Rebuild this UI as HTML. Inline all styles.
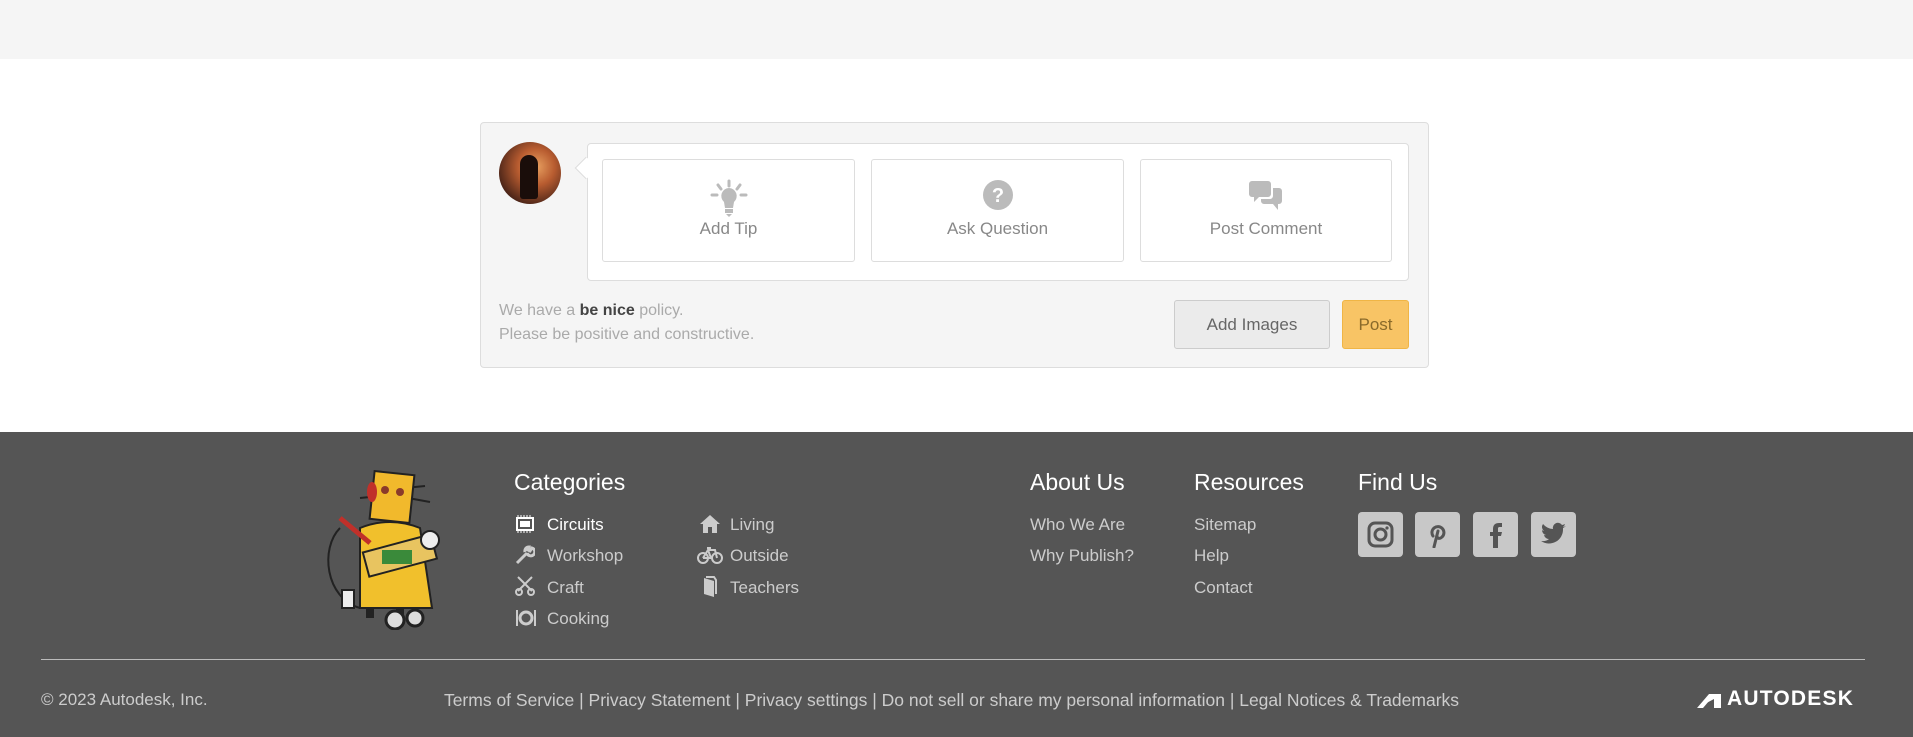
<!DOCTYPE html>
<html><head><meta charset="utf-8"><style>
*{box-sizing:border-box;margin:0;padding:0}
body{width:1913px;height:737px;overflow:hidden;background:#fff;font-family:"Liberation Sans",sans-serif;position:relative}
.abs{position:absolute}
.top{left:0;top:0;width:1913px;height:59px;background:#f5f5f5}
.box{left:480px;top:122px;width:949px;height:246px;background:#f5f5f5;border:1px solid #ddd;border-radius:4px}
.av{left:499px;top:142px;width:62px;height:62px;border-radius:50%;background:radial-gradient(circle at 60% 40%,#e8a060 0,#b85c30 35%,#4a2418 75%,#1c0f0c 100%)}
.inner{left:587px;top:143px;width:822px;height:138px;background:#fff;border:1px solid #ddd;border-radius:4px}
.tri{left:578px;top:160px;width:16px;height:16px;background:#fff;border-left:1px solid #ddd;border-bottom:1px solid #ddd;transform:rotate(45deg)}
.btn{top:159px;height:103px;background:#fff;border:1px solid #ddd;border-radius:3px;text-align:center;color:#888;font-size:17px}
.btn svg{position:absolute;left:50%;top:19px;transform:translateX(-50%)}
.btn span{position:absolute;left:0;right:0;top:59px}
.pol{left:499px;color:#aaa;font-size:16px}
.pol b{color:#444}
.ai{left:1174px;top:300px;width:156px;height:49px;background:#ebebeb;border:1px solid #ccc;border-radius:3px;color:#666;font-size:17px;text-align:center;line-height:47px}
.post{left:1342px;top:300px;width:67px;height:49px;background:#f8c465;border:1px solid #f0b545;border-radius:3px;color:#8a6a2a;font-size:17px;text-align:center;line-height:47px}
.foot{left:0;top:432px;width:1913px;height:305px;background:#555}
.h{color:#fff;font-size:23px;top:469px}
.it{color:#ccc;font-size:17px}
.it.w{color:#fff}
.soc{top:512px;width:45px;height:45px;background:#c8c8c8;border-radius:4px}
.soc svg{position:absolute;left:9px;top:9px}
.hr{left:41px;top:659px;width:1824px;height:1px;background:#bbb}
.bot{top:690px;color:#ccc;font-size:17px}
</style></head><body>
<div class="abs top"></div>
<div class="abs box"></div>
<div class="abs av"></div>
<div class="abs" style="left:520px;top:155px;width:18px;height:44px;background:#1a0d0a;border-radius:9px 9px 3px 3px"></div>
<div class="abs inner"></div>
<div class="abs tri"></div>
<div class="abs btn" style="left:602px;width:253px"><svg width="40" height="38" viewBox="0 0 40 38"><g stroke="#bbb" stroke-width="3" stroke-linecap="round"><line x1="20" y1="2" x2="20" y2="7"/><line x1="9" y1="6" x2="12" y2="10"/><line x1="31" y1="6" x2="28" y2="10"/><line x1="3" y1="16" x2="8" y2="16"/><line x1="32" y1="16" x2="37" y2="16"/></g><path d="M20 9a8 8 0 0 0-5 14l1 6h8l1-6a8 8 0 0 0-5-14z" fill="#bbb"/><rect x="16" y="30" width="8" height="4" fill="#bbb"/><path d="M17 35h6l-3 3z" fill="#bbb"/></svg><span>Add Tip</span></div>
<div class="abs btn" style="left:871px;width:253px"><svg width="32" height="32" viewBox="0 0 32 32"><circle cx="16" cy="16" r="15" fill="#bbb"/><text x="16" y="23" text-anchor="middle" font-family="Liberation Sans" font-weight="bold" font-size="20" fill="#fff">?</text></svg><span>Ask Question</span></div>
<div class="abs btn" style="left:1140px;width:252px"><svg width="36" height="32" viewBox="0 0 36 32"><path d="M4 2h16a3 3 0 0 1 3 3v10a3 3 0 0 1-3 3H11l-5 5v-5H4a3 3 0 0 1-3-3V5a3 3 0 0 1 3-3z" fill="#bbb"/><path d="M25 9h6a3 3 0 0 1 3 3v10a3 3 0 0 1-3 3h-1v6l-5-6h-9a3 3 0 0 1-3-3v-2h9a3 3 0 0 0 3-3z" fill="#bbb"/></svg><span>Post Comment</span></div>
<div class="abs pol" style="top:302px">We have a <b>be nice</b> policy.</div>
<div class="abs pol" style="top:326px">Please be positive and constructive.</div>
<div class="abs ai">Add Images</div>
<div class="abs post">Post</div>

<div class="abs foot"></div>
<svg class="abs" style="left:320px;top:468px" width="150" height="162" viewBox="0 0 150 162">
<path d="M20 60c-20 20-15 70 20 80" stroke="#222" stroke-width="2" fill="none"/>
<path d="M60 28L40 30M85 20l20-2M88 30l22 4" stroke="#222" stroke-width="2"/>
<rect x="52" y="5" width="40" height="48" fill="#f1b92c" stroke="#222" stroke-width="2" transform="rotate(6 72 29)"/>
<circle cx="65" cy="22" r="4" fill="#8a3a2a"/><circle cx="80" cy="24" r="4" fill="#8a3a2a"/>
<ellipse cx="52" cy="24" rx="5" ry="10" fill="#c0302a"/>
<path d="M40 60q30-12 60 0l12 80h-72z" fill="#f1c02c" stroke="#222" stroke-width="2"/>
<path d="M20 50l30 25" stroke="#c0302a" stroke-width="5"/>
<rect x="45" y="75" width="70" height="25" fill="#e8c460" stroke="#222" stroke-width="2" transform="rotate(-15 80 88)"/>
<circle cx="110" cy="72" r="9" fill="#eee" stroke="#222" stroke-width="2"/>
<rect x="62" y="82" width="30" height="14" fill="#3a8a3a"/>
<path d="M50 140v10M80 140v10" stroke="#222" stroke-width="8"/>
<circle cx="75" cy="152" r="9" fill="#ddd" stroke="#222" stroke-width="3"/><circle cx="95" cy="150" r="8" fill="#ddd" stroke="#222" stroke-width="3"/>
<rect x="22" y="122" width="12" height="18" fill="#eee" stroke="#222" stroke-width="2"/>
</svg>
<div class="abs h" style="left:514px">Categories</div>
<div class="abs h" style="left:1030px">About Us</div>
<div class="abs h" style="left:1194px">Resources</div>
<div class="abs h" style="left:1358px">Find Us</div>

<svg class="abs" style="left:515px;top:514px" width="20" height="20" viewBox="0 0 20 20"><rect x="2" y="4" width="16" height="12" fill="none" stroke="#fff" stroke-width="2"/><rect x="5" y="7" width="10" height="6" fill="#fff"/><path d="M3 1v2M6 1v2M9 1v2M12 1v2M15 1v2M3 17v2M6 17v2M9 17v2M12 17v2M15 17v2" stroke="#fff"/></svg>
<div class="abs it w" style="left:547px;top:515px">Circuits</div>
<svg class="abs" style="left:515px;top:545px" width="20" height="20" viewBox="0 0 20 20"><path d="M2 18l10-10M12 8a4 4 0 1 0 5-5l-2 3-2-1 1-3a4 4 0 0 0-4 5" stroke="#ccc" stroke-width="3" fill="none"/></svg>
<div class="abs it" style="left:547px;top:546px">Workshop</div>
<svg class="abs" style="left:515px;top:576px" width="20" height="20" viewBox="0 0 20 20"><path d="M3 1l14 14M17 1L3 15" stroke="#ccc" stroke-width="2"/><circle cx="4" cy="16" r="3" fill="none" stroke="#ccc" stroke-width="2"/><circle cx="16" cy="16" r="3" fill="none" stroke="#ccc" stroke-width="2"/></svg>
<div class="abs it" style="left:547px;top:578px">Craft</div>
<svg class="abs" style="left:515px;top:608px" width="22" height="20" viewBox="0 0 22 20"><path d="M2 2v16M20 2v16" stroke="#ccc" stroke-width="2"/><circle cx="11" cy="10" r="6" fill="none" stroke="#ccc" stroke-width="3"/></svg>
<div class="abs it" style="left:547px;top:609px">Cooking</div>

<svg class="abs" style="left:699px;top:514px" width="22" height="20" viewBox="0 0 22 20"><path d="M11 1L1 10h3v9h5v-6h4v6h5v-9h3z" fill="#ccc"/></svg>
<div class="abs it" style="left:730px;top:515px">Living</div>
<svg class="abs" style="left:697px;top:545px" width="26" height="20" viewBox="0 0 26 20"><circle cx="6" cy="13" r="5" fill="none" stroke="#ccc" stroke-width="2"/><circle cx="20" cy="13" r="5" fill="none" stroke="#ccc" stroke-width="2"/><path d="M6 13l5-8h7l2 8M11 5l3 8h-8M10 3h4" stroke="#ccc" stroke-width="2" fill="none"/></svg>
<div class="abs it" style="left:730px;top:546px">Outside</div>
<svg class="abs" style="left:702px;top:576px" width="16" height="22" viewBox="0 0 16 22"><path d="M2 2l10 3v16L2 18z" fill="#ccc"/><path d="M4 1h8l2 3v14" stroke="#ccc" fill="none" stroke-width="2"/></svg>
<div class="abs it" style="left:730px;top:578px">Teachers</div>

<div class="abs it" style="left:1030px;top:515px">Who We Are</div>
<div class="abs it" style="left:1030px;top:546px">Why Publish?</div>
<div class="abs it" style="left:1194px;top:515px">Sitemap</div>
<div class="abs it" style="left:1194px;top:546px">Help</div>
<div class="abs it" style="left:1194px;top:578px">Contact</div>

<div class="abs soc" style="left:1358px"><svg width="27" height="27" viewBox="0 0 27 27"><rect x="2" y="2" width="23" height="23" rx="6" fill="none" stroke="#555" stroke-width="3"/><circle cx="13.5" cy="13.5" r="5.5" fill="none" stroke="#555" stroke-width="3"/><circle cx="20" cy="7" r="1.6" fill="#555"/></svg></div>
<div class="abs soc" style="left:1415px"><svg width="27" height="27" viewBox="0 0 27 27"><path d="M10 26l4-16M9 15a6 6 0 1 1 9 1c-2 2-5 2-5-1" stroke="#555" stroke-width="3" fill="none" stroke-linecap="round"/></svg></div>
<div class="abs soc" style="left:1473px"><svg width="27" height="27" viewBox="0 0 27 27"><path d="M11 27V15H8v-4h3V8c0-4 2-6 6-6h3v4h-2c-2 0-2 1-2 2v3h4l-1 4h-3v12z" fill="#555"/></svg></div>
<div class="abs soc" style="left:1531px"><svg width="27" height="27" viewBox="0 0 27 27"><path d="M26 5a10 10 0 0 1-3 1 5 5 0 0 0 2-3 10 10 0 0 1-3 1 5 5 0 0 0-9 4A14 14 0 0 1 3 3a5 5 0 0 0 1 7 5 5 0 0 1-2-1 5 5 0 0 0 4 5 5 5 0 0 1-2 0 5 5 0 0 0 5 4 10 10 0 0 1-8 2 14 14 0 0 0 22-12v-1a10 10 0 0 0 3-2z" fill="#555"/></svg></div>

<div class="abs hr"></div>
<div class="abs bot" style="left:41px">© 2023 Autodesk, Inc.</div>
<div class="abs bot" style="left:420px;width:1063px;text-align:center;white-space:nowrap;font-size:17.5px">Terms of Service | Privacy Statement | Privacy settings | Do not sell or share my personal information | Legal Notices &amp; Trademarks</div>
<svg class="abs" style="left:1697px;top:692px" width="24" height="16" viewBox="0 0 24 16"><path d="M0 16L12 2h12v14h-7V7z" fill="#fff"/><path d="M0 16h6l6-7" fill="#fff"/></svg>
<div class="abs" style="left:1727px;top:687px;color:#fff;font-weight:bold;font-size:21px;letter-spacing:1.2px">AUTODESK</div>
</body></html>
